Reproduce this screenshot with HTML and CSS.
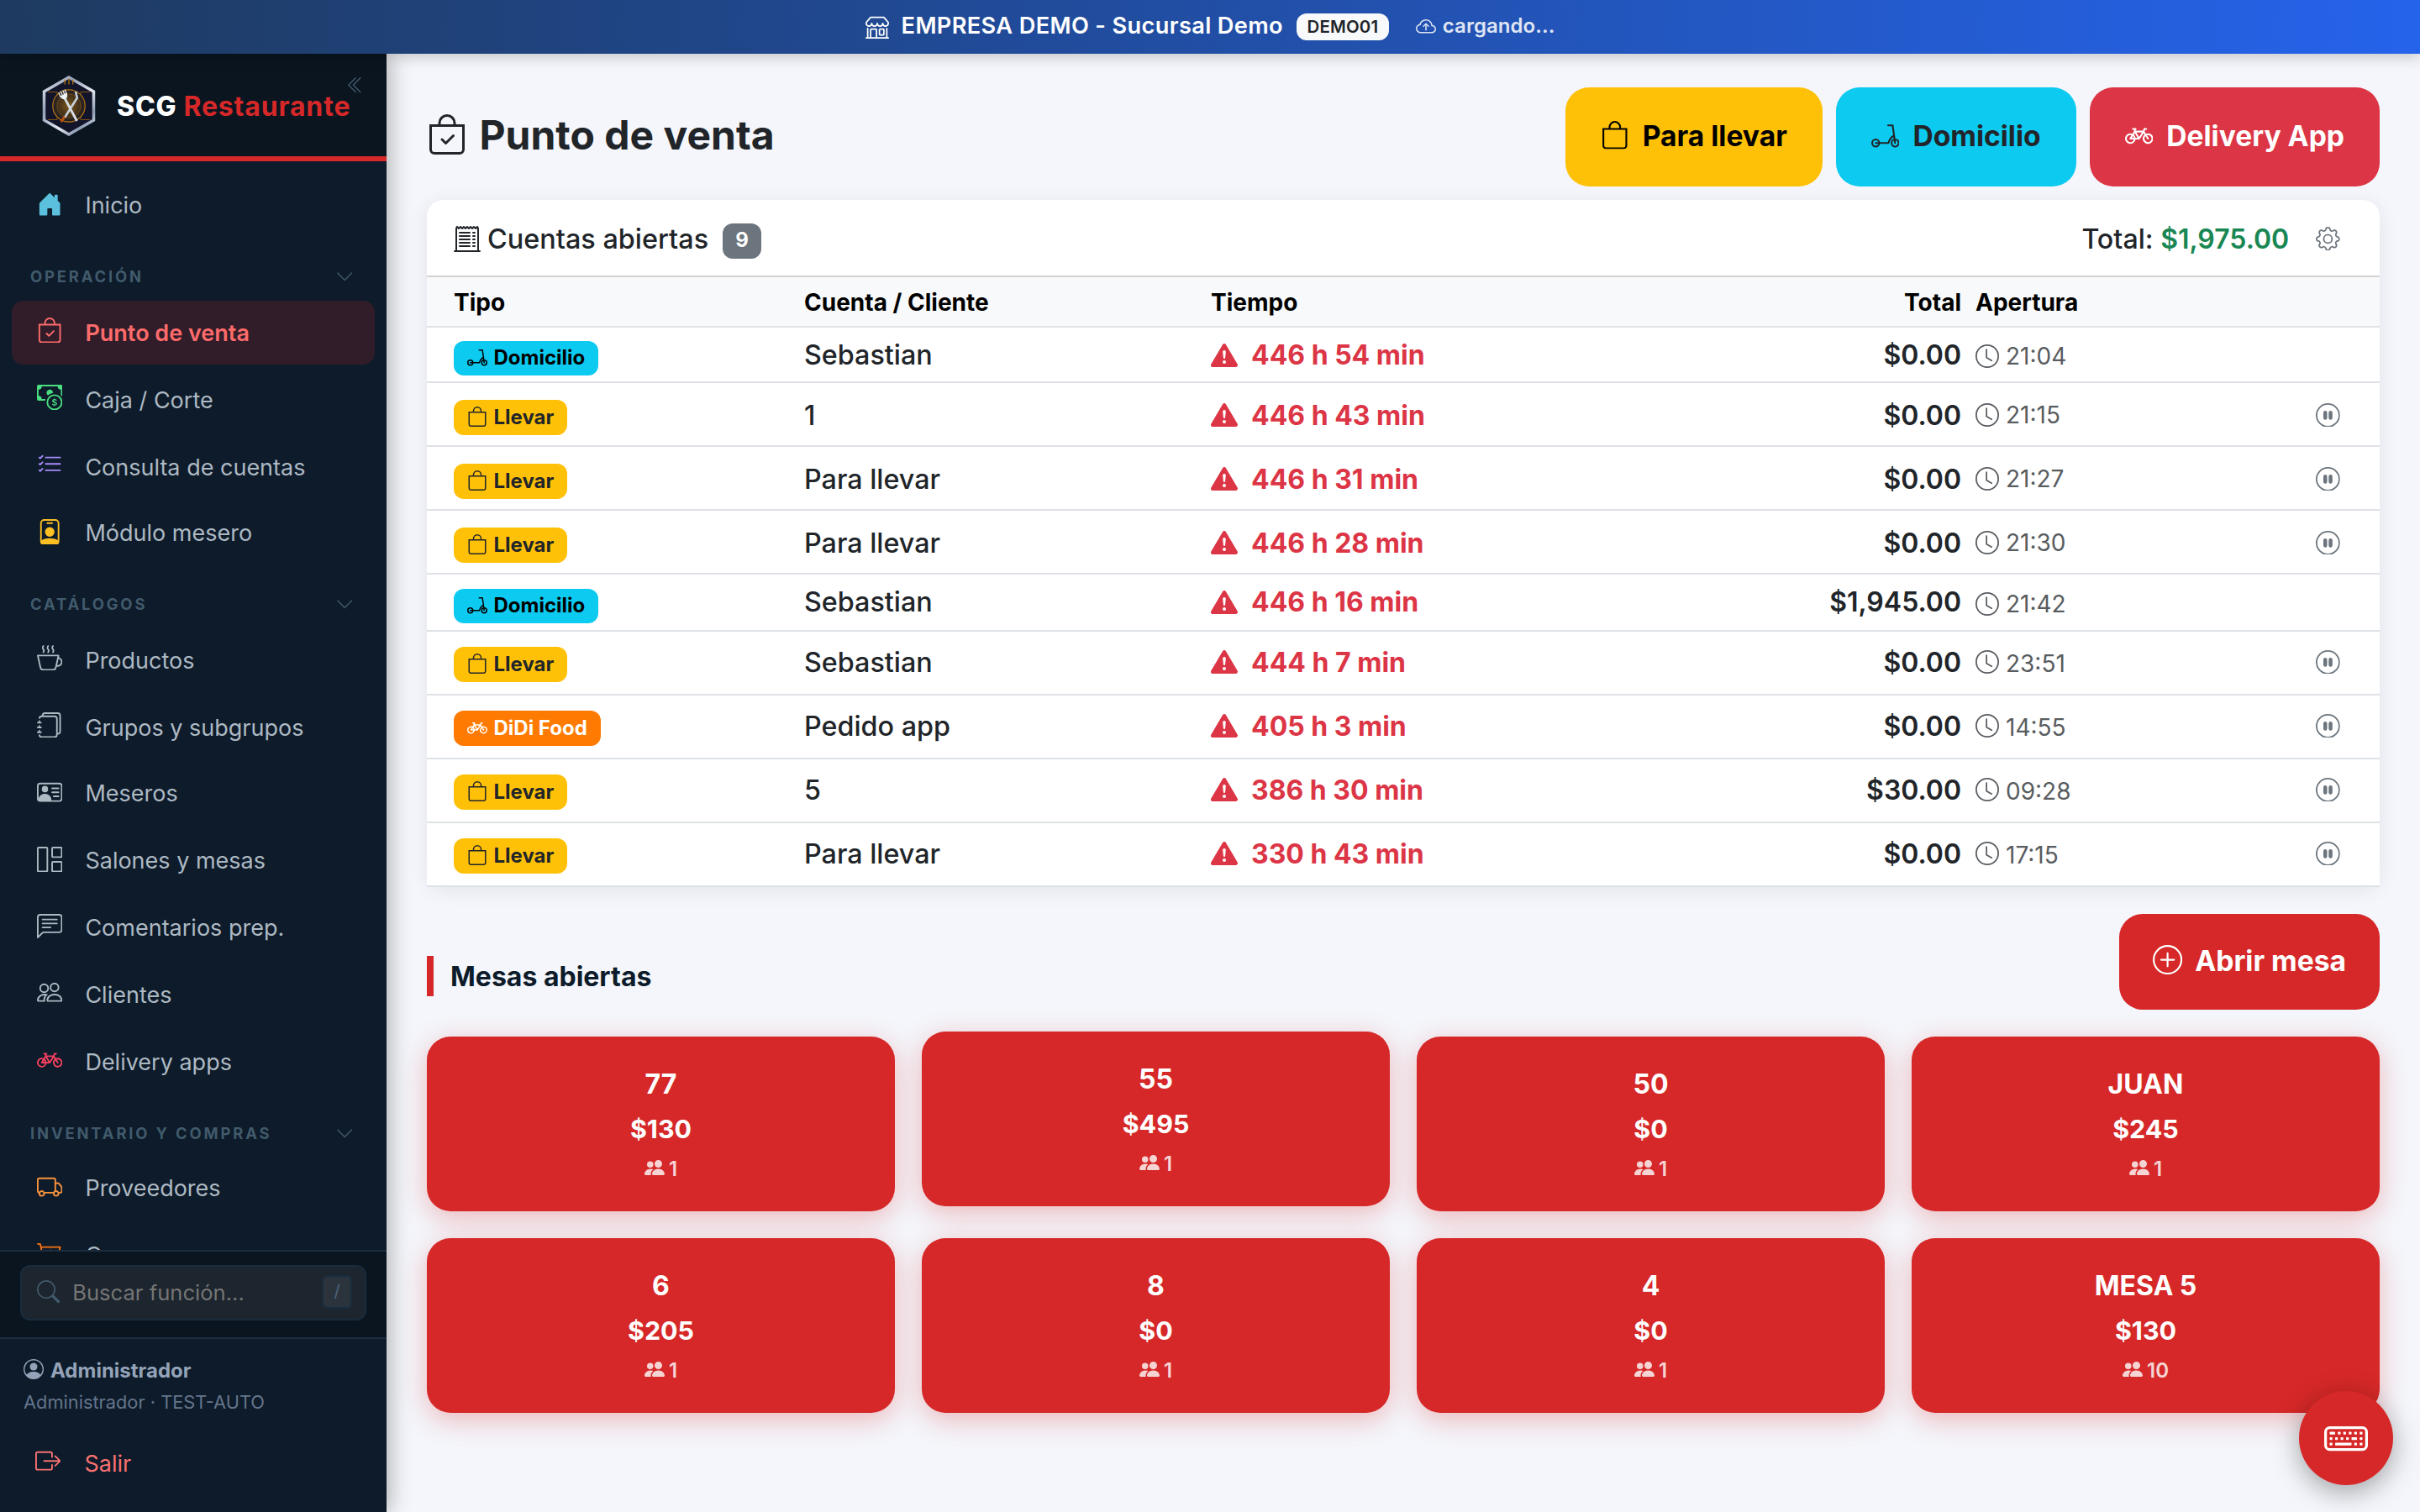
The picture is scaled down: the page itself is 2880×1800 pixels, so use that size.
FILE: index.html
```html
<!DOCTYPE html>
<html lang="es">
<head>
<meta charset="utf-8">
<title>Punto de venta - SCG Restaurante</title>
<link rel="stylesheet" href="styles.css">
</head>
<body>
<svg class="sprite" aria-hidden="true">
  <symbol id="bag" viewBox="0 0 16 16"><path d="M8 1a2.5 2.5 0 0 1 2.5 2.5V4h-5v-.5A2.5 2.5 0 0 1 8 1m3.5 3v-.5a3.5 3.5 0 1 0-7 0V4H1v10a2 2 0 0 0 2 2h10a2 2 0 0 0 2-2V4zM2 5h12v9a1 1 0 0 1-1 1H3a1 1 0 0 1-1-1z"/></symbol>
  <symbol id="bag-check" viewBox="0 0 16 16"><path d="M10.854 8.146a.5.5 0 0 1 0 .708l-3 3a.5.5 0 0 1-.708 0l-1.5-1.5a.5.5 0 0 1 .708-.708L7.5 10.793l2.646-2.647a.5.5 0 0 1 .708 0"/><path d="M8 1a2.5 2.5 0 0 1 2.5 2.5V4h-5v-.5A2.5 2.5 0 0 1 8 1m3.5 3v-.5a3.5 3.5 0 1 0-7 0V4H1v10a2 2 0 0 0 2 2h10a2 2 0 0 0 2-2V4zM2 5h12v9a1 1 0 0 1-1 1H3a1 1 0 0 1-1-1z"/></symbol>
  <symbol id="scooter" viewBox="0 0 16 16"><g fill="none" stroke="currentColor" stroke-linecap="round" stroke-linejoin="round"><circle cx="2.5" cy="12.5" r="2"/><circle cx="13.5" cy="12.5" r="2"/><path d="M9.5 2.5h2.6l1.4 10M2.5 12.5H9.7C10.2 10.8 11.3 9 12.9 8.3"/></g></symbol>
  <symbol id="bicycle" viewBox="0 0 16 16"><path d="M4 4.5a.5.5 0 0 1 .5-.5H6a.5.5 0 0 1 0 1v.5h4.14l.386-1.158A.5.5 0 0 1 11 4h1a.5.5 0 0 1 0 1h-.64l-.311.935.807 1.29a3 3 0 1 1-.848.53l-.508-.812-2.076 3.322A.5.5 0 0 1 8 10.5H5.959a3 3 0 1 1-1.815-3.274L5 5.856V5h-.5a.5.5 0 0 1-.5-.5m1.5 2.443-.508.814c.5.444.85 1.054.967 1.743h1.139zM8 9.057 9.598 6.5H6.402zM4.937 9.5a2 2 0 0 0-.487-.877l-.548.877zM3.603 8.092A2 2 0 1 0 4.937 10.5H3a.5.5 0 0 1-.424-.765zm7.947.53a2 2 0 1 0 .848-.53l1.026 1.643a.5.5 0 1 1-.848.53z"/></symbol>
  <symbol id="receipt" viewBox="0 0 16 16"><path d="M3 4.5a.5.5 0 0 1 .5-.5h6a.5.5 0 1 1 0 1h-6a.5.5 0 0 1-.5-.5m0 2a.5.5 0 0 1 .5-.5h6a.5.5 0 1 1 0 1h-6a.5.5 0 0 1-.5-.5m0 2a.5.5 0 0 1 .5-.5h6a.5.5 0 1 1 0 1h-6a.5.5 0 0 1-.5-.5m0 2a.5.5 0 0 1 .5-.5h6a.5.5 0 0 1 0 1h-6a.5.5 0 0 1-.5-.5m0 2a.5.5 0 0 1 .5-.5h6a.5.5 0 0 1 0 1h-6a.5.5 0 0 1-.5-.5M11.5 4a.5.5 0 0 0 0 1h1a.5.5 0 0 0 0-1zm0 2a.5.5 0 0 0 0 1h1a.5.5 0 0 0 0-1zm0 2a.5.5 0 0 0 0 1h1a.5.5 0 0 0 0-1zm0 2a.5.5 0 0 0 0 1h1a.5.5 0 0 0 0-1zm0 2a.5.5 0 0 0 0 1h1a.5.5 0 0 0 0-1z"/><path d="M2.354.646a.5.5 0 0 0-.801.13l-.5 1A.5.5 0 0 0 1 2v13H.5a.5.5 0 0 0 0 1h15a.5.5 0 0 0 0-1H15V2a.5.5 0 0 0-.053-.224l-.5-1a.5.5 0 0 0-.8-.13L13 1.293l-.646-.647a.5.5 0 0 0-.708 0L11 1.293l-.646-.647a.5.5 0 0 0-.708 0L9 1.293 8.354.646a.5.5 0 0 0-.708 0L7 1.293 6.354.646a.5.5 0 0 0-.708 0L5 1.293 4.354.646a.5.5 0 0 0-.708 0L3 1.293zm-.217 1.198.51.51a.5.5 0 0 0 .707 0L4 1.707l.646.647a.5.5 0 0 0 .708 0L6 1.707l.646.647a.5.5 0 0 0 .708 0L8 1.707l.646.647a.5.5 0 0 0 .708 0L10 1.707l.646.647a.5.5 0 0 0 .708 0L12 1.707l.646.647a.5.5 0 0 0 .708 0l.509-.51.137.274V15H2V2.118z"/></symbol>
  <symbol id="clock" viewBox="0 0 16 16"><path d="M8 3.5a.5.5 0 0 0-1 0V9a.5.5 0 0 0 .252.434l3.5 2a.5.5 0 0 0 .496-.868L8 8.71z"/><path d="M8 16A8 8 0 1 0 8 0a8 8 0 0 0 0 16m7-8A7 7 0 1 1 1 8a7 7 0 0 1 14 0"/></symbol>
  <symbol id="pause" viewBox="0 0 16 16"><path d="M8 15A7 7 0 1 1 8 1a7 7 0 0 1 0 14m0 1A8 8 0 1 0 8 0a8 8 0 0 0 0 16"/><path d="M5 6.25a1.25 1.25 0 1 1 2.5 0v3.5a1.25 1.25 0 1 1-2.5 0zm3.5 0a1.25 1.25 0 1 1 2.5 0v3.5a1.25 1.25 0 1 1-2.5 0z"/></symbol>
  <symbol id="warn" viewBox="0 0 16 16"><path d="M8.982 1.566a1.13 1.13 0 0 0-1.96 0L.165 13.233c-.457.778.091 1.767.98 1.767h13.713c.889 0 1.438-.99.98-1.767zM8 5c.535 0 .954.462.9.995l-.35 3.507a.552.552 0 0 1-1.1 0L7.1 5.995A.905.905 0 0 1 8 5m.002 6a1 1 0 1 1 0 2 1 1 0 0 1 0-2"/></symbol>
  <symbol id="gear" viewBox="0 0 16 16"><path d="M8 4.754a3.246 3.246 0 1 0 0 6.492 3.246 3.246 0 0 0 0-6.492M5.754 8a2.246 2.246 0 1 1 4.492 0 2.246 2.246 0 0 1-4.492 0"/><path d="M9.796 1.343c-.527-1.79-3.065-1.79-3.592 0l-.094.319a.873.873 0 0 1-1.255.52l-.292-.16c-1.64-.892-3.433.902-2.54 2.541l.159.292a.873.873 0 0 1-.52 1.255l-.319.094c-1.79.527-1.79 3.065 0 3.592l.319.094a.873.873 0 0 1 .52 1.255l-.16.292c-.892 1.64.901 3.434 2.541 2.54l.292-.159a.873.873 0 0 1 1.255.52l.094.319c.527 1.79 3.065 1.79 3.592 0l.094-.319a.873.873 0 0 1 1.255-.52l.292.16c1.64.893 3.434-.902 2.54-2.541l-.159-.292a.873.873 0 0 1 .52-1.255l.319-.094c1.79-.527 1.79-3.065 0-3.592l-.319-.094a.873.873 0 0 1-.52-1.255l.16-.292c.893-1.64-.902-3.433-2.541-2.54l-.292.159a.873.873 0 0 1-1.255-.52zm-2.633.283c.246-.835 1.428-.835 1.674 0l.094.319a1.873 1.873 0 0 0 2.693 1.115l.291-.16c.764-.415 1.6.42 1.184 1.185l-.159.292a1.873 1.873 0 0 0 1.116 2.692l.318.094c.835.246.835 1.428 0 1.674l-.319.094a1.873 1.873 0 0 0-1.115 2.693l.16.291c.415.764-.42 1.6-1.185 1.184l-.291-.159a1.873 1.873 0 0 0-2.693 1.116l-.094.318c-.246.835-1.428.835-1.674 0l-.094-.319a1.873 1.873 0 0 0-2.692-1.115l-.292.16c-.764.415-1.6-.42-1.184-1.185l.159-.291A1.873 1.873 0 0 0 1.945 8.93l-.319-.094c-.835-.246-.835-1.428 0-1.674l.319-.094A1.873 1.873 0 0 0 3.06 4.377l-.16-.292c-.415-.764.42-1.6 1.185-1.184l.292.159a1.873 1.873 0 0 0 2.692-1.115z"/></symbol>
  <symbol id="shop" viewBox="0 0 16 16"><path d="M2.97 1.35A1 1 0 0 1 3.73 1h8.54a1 1 0 0 1 .76.35l2.609 3.044A1.5 1.5 0 0 1 16 5.37v.255a2.375 2.375 0 0 1-4.25 1.458A2.37 2.37 0 0 1 9.875 8 2.37 2.37 0 0 1 8 7.083 2.37 2.37 0 0 1 6.125 8a2.37 2.37 0 0 1-1.875-.917A2.375 2.375 0 0 1 0 5.625V5.37a1.5 1.5 0 0 1 .361-.976zm1.78 4.275a1.375 1.375 0 0 0 2.75 0 .5.5 0 0 1 1 0 1.375 1.375 0 0 0 2.75 0 .5.5 0 0 1 1 0 1.375 1.375 0 1 0 2.75 0V5.37a.5.5 0 0 0-.12-.325L12.27 2H3.73L1.12 5.045A.5.5 0 0 0 1 5.37v.255a1.375 1.375 0 0 0 2.75 0 .5.5 0 0 1 1 0M1.5 8.5A.5.5 0 0 1 2 9v6h1v-5a1 1 0 0 1 1-1h3a1 1 0 0 1 1 1v5h6V9a.5.5 0 0 1 1 0v6h.5a.5.5 0 0 1 0 1H.5a.5.5 0 0 1 0-1H1V9a.5.5 0 0 1 .5-.5M4 15h3v-5H4zm5-5a1 1 0 0 1 1-1h2a1 1 0 0 1 1 1v3a1 1 0 0 1-1 1h-2a1 1 0 0 1-1-1zm3 0h-2v3h2z"/></symbol>
  <symbol id="cloud" viewBox="0 0 16 16"><path d="M7.646 5.146a.5.5 0 0 1 .708 0l2 2a.5.5 0 0 1-.708.708L8.5 6.707V10.5a.5.5 0 0 1-1 0V6.707L6.354 7.854a.5.5 0 1 1-.708-.708z"/><path d="M4.406 3.342A5.53 5.53 0 0 1 8 2c2.69 0 4.923 2 5.166 4.579C14.758 6.804 16 8.137 16 9.773 16 11.569 14.502 13 12.687 13H3.781C1.708 13 0 11.366 0 9.318c0-1.763 1.266-3.223 2.942-3.593.143-.863.698-1.723 1.464-2.383m.653.757c-.757.653-1.153 1.44-1.153 2.056v.448l-.445.049C2.064 6.805 1 7.952 1 9.318 1 10.785 2.23 12 3.781 12h8.906C13.98 12 15 10.988 15 9.773c0-1.216-1.02-2.228-2.313-2.228h-.5v-.5C12.188 4.825 10.328 3 8 3a4.53 4.53 0 0 0-2.941 1.1z"/></symbol>
  <symbol id="people-fill" viewBox="0 0 16 16"><path d="M7 14s-1 0-1-1 1-4 5-4 5 3 5 4-1 1-1 1zm4-6a3 3 0 1 0 0-6 3 3 0 0 0 0 6m-5.784 6A2.24 2.24 0 0 1 5 13c0-1.355.68-2.75 1.936-3.72A6.3 6.3 0 0 0 5 9c-4 0-5 3-5 4s1 1 1 1zM4.5 8a2.5 2.5 0 1 0 0-5 2.5 2.5 0 0 0 0 5"/></symbol>
  <symbol id="people" viewBox="0 0 16 16"><path d="M15 14s1 0 1-1-1-4-5-4-5 3-5 4 1 1 1 1zm-7.978-1L7 12.996c.001-.264.167-1.03.76-1.72C8.312 10.629 9.282 10 11 10c1.717 0 2.687.63 3.24 1.276.593.69.758 1.457.76 1.72l-.008.002-.014.002zM11 7a2 2 0 1 0 0-4 2 2 0 0 0 0 4m3-2a3 3 0 1 1-6 0 3 3 0 0 1 6 0M6.936 9.28a6 6 0 0 0-1.23-.247A7 7 0 0 0 5 9c-4 0-5 3-5 4q0 1 1 1h4.216A2.24 2.24 0 0 1 5 13c0-1.01.377-2.042 1.09-2.904.243-.294.526-.569.846-.816M4.92 10A5.5 5.5 0 0 0 4 13H1c0-.26.164-1.03.76-1.724.545-.636 1.492-1.256 3.16-1.275ZM1.5 5.5a3 3 0 1 1 6 0 3 3 0 0 1-6 0m3-2a2 2 0 1 0 0 4 2 2 0 0 0 0-4"/></symbol>
  <symbol id="plus-circle" viewBox="0 0 16 16"><path d="M8 15A7 7 0 1 1 8 1a7 7 0 0 1 0 14m0 1A8 8 0 1 0 8 0a8 8 0 0 0 0 16"/><path d="M8 4a.5.5 0 0 1 .5.5v3h3a.5.5 0 0 1 0 1h-3v3a.5.5 0 0 1-1 0v-3h-3a.5.5 0 0 1 0-1h3v-3A.5.5 0 0 1 8 4"/></symbol>
  <symbol id="keyboard" viewBox="0 0 16 16"><path d="M14 5a1 1 0 0 1 1 1v5a1 1 0 0 1-1 1H2a1 1 0 0 1-1-1V6a1 1 0 0 1 1-1zM2 4a2 2 0 0 0-2 2v5a2 2 0 0 0 2 2h12a2 2 0 0 0 2-2V6a2 2 0 0 0-2-2z"/><g><rect x="2" y="6" width="2" height="1" rx=".25"/><rect x="5" y="6" width="1" height="1" rx=".25"/><rect x="7" y="6" width="1" height="1" rx=".25"/><rect x="9" y="6" width="1" height="1" rx=".25"/><rect x="11" y="6" width="1" height="1" rx=".25"/><rect x="13" y="6" width="1" height="1" rx=".25"/><rect x="2" y="8" width="1" height="1" rx=".25"/><rect x="4" y="8" width="1" height="1" rx=".25"/><rect x="6" y="8" width="1" height="1" rx=".25"/><rect x="8" y="8" width="1" height="1" rx=".25"/><rect x="10" y="8" width="2" height="1" rx=".25"/><rect x="13" y="8" width="1" height="1" rx=".25"/><rect x="2" y="10" width="1" height="1" rx=".25"/><rect x="4" y="10" width="6" height="1" rx=".25"/><rect x="11" y="10" width="1" height="1" rx=".25"/><rect x="13" y="10" width="1" height="1" rx=".25"/></g></symbol>
  <symbol id="house" viewBox="0 0 16 16"><path d="M6.5 14.5v-3.505c0-.245.25-.495.5-.495h2c.25 0 .5.25.5.5v3.5a.5.5 0 0 0 .5.5h4a.5.5 0 0 0 .5-.5v-7a.5.5 0 0 0-.146-.354L13 5.793V2.5a.5.5 0 0 0-.5-.5h-1a.5.5 0 0 0-.5.5v1.293L8.354 1.146a.5.5 0 0 0-.708 0l-6 6A.5.5 0 0 0 1.5 7.5v7a.5.5 0 0 0 .5.5h4a.5.5 0 0 0 .5-.5"/></symbol>
  <symbol id="cash" viewBox="0 0 16 16"><path fill-rule="evenodd" d="M11 15a4 4 0 1 0 0-8 4 4 0 0 0 0 8m5-4a5 5 0 1 1-10 0 5 5 0 0 1 10 0"/><path d="M9.438 11.944c.047.596.518 1.06 1.363 1.116v.44h.375v-.443c.875-.061 1.386-.529 1.386-1.207 0-.618-.39-.936-1.09-1.1l-.296-.07v-1.2c.376.043.614.248.671.532h.658c-.047-.575-.54-1.024-1.329-1.073V8.5h-.375v.45c-.747.073-1.255.522-1.255 1.158 0 .562.378.92 1.007 1.066l.248.061v1.272c-.384-.058-.639-.27-.696-.563h-.668zm1.36-1.354c-.369-.085-.569-.26-.569-.522 0-.294.216-.514.572-.578v1.1zm.432.746c.449.104.655.272.655.569 0 .339-.257.571-.709.614v-1.195z"/><path d="M1 0a1 1 0 0 0-1 1v8a1 1 0 0 0 1 1h4.083q.088-.517.258-1H3a2 2 0 0 0-2-2V3a2 2 0 0 0 2-2h10a2 2 0 0 0 2 2v3.528c.38.34.717.728 1 1.154V1a1 1 0 0 0-1-1z"/><path d="M9.998 5.083 10 5a2 2 0 1 0-3.132 1.65 6 6 0 0 1 3.13-1.567"/></symbol>
  <symbol id="list-check" viewBox="0 0 16 16"><path d="M5 11.5a.5.5 0 0 1 .5-.5h9a.5.5 0 0 1 0 1h-9a.5.5 0 0 1-.5-.5m0-4a.5.5 0 0 1 .5-.5h9a.5.5 0 0 1 0 1h-9a.5.5 0 0 1-.5-.5m0-4a.5.5 0 0 1 .5-.5h9a.5.5 0 0 1 0 1h-9a.5.5 0 0 1-.5-.5M3.854 2.146a.5.5 0 0 1 0 .708l-1.5 1.5a.5.5 0 0 1-.708 0l-.5-.5a.5.5 0 1 1 .708-.708L2 3.293l1.146-1.147a.5.5 0 0 1 .708 0m0 4a.5.5 0 0 1 0 .708l-1.5 1.5a.5.5 0 0 1-.708 0l-.5-.5a.5.5 0 1 1 .708-.708L2 7.293l1.146-1.147a.5.5 0 0 1 .708 0m0 4a.5.5 0 0 1 0 .708l-1.5 1.5a.5.5 0 0 1-.708 0l-.5-.5a.5.5 0 0 1 .708-.708l.146.147 1.146-1.147a.5.5 0 0 1 .708 0"/></symbol>
  <symbol id="badge-person" viewBox="0 0 16 16"><path d="M6.5 2a.5.5 0 0 0 0 1h3a.5.5 0 0 0 0-1zM11 8a3 3 0 1 1-6 0 3 3 0 0 1 6 0"/><path d="M4.5 0A2.5 2.5 0 0 0 2 2.5V14a2 2 0 0 0 2 2h8a2 2 0 0 0 2-2V2.5A2.5 2.5 0 0 0 11.5 0zM3 2.5A1.5 1.5 0 0 1 4.5 1h7A1.5 1.5 0 0 1 13 2.5v10.795a4.2 4.2 0 0 0-.776-.492C11.392 12.387 10.063 12 8 12s-3.392.387-4.224.803a4.2 4.2 0 0 0-.776.492z"/></symbol>
  <symbol id="cup" viewBox="0 0 16 16"><path fill-rule="evenodd" d="M.5 6a.5.5 0 0 0-.488.608l1.652 7.434A2.5 2.5 0 0 0 4.104 16h5.792a2.5 2.5 0 0 0 2.44-1.958l.131-.59a3 3 0 0 0 1.3-5.854l.221-.99A.5.5 0 0 0 13.5 6zM13 12.5a2 2 0 0 1-.316-.025l.867-3.898A2.001 2.001 0 0 1 13 12.5M2.64 13.825 1.123 7h11.754l-1.517 6.825A1.5 1.5 0 0 1 9.896 15H4.104a1.5 1.5 0 0 1-1.464-1.175"/><g fill="none" stroke="currentColor" stroke-linecap="round"><path d="M4 .6C3.3 1.6 3.3 1.8 4 2.6 4.6 3.4 4.6 3.6 4 4.5M7 .6C6.3 1.6 6.3 1.8 7 2.6 7.6 3.4 7.6 3.6 7 4.5M10 .6C9.3 1.6 9.3 1.8 10 2.6 10.6 3.4 10.6 3.6 10 4.5"/></g></symbol>
  <symbol id="journals" viewBox="0 0 16 16"><path d="M5 0h8a2 2 0 0 1 2 2v10a2 2 0 0 1-2 2 2 2 0 0 1-2 2H3a2 2 0 0 1-2-2h1a1 1 0 0 0 1 1h8a1 1 0 0 0 1-1V4a1 1 0 0 0-1-1H3a1 1 0 0 0-1 1H1a2 2 0 0 1 2-2h8a2 2 0 0 1 2 2v9a1 1 0 0 0 1-1V2a1 1 0 0 0-1-1H5a1 1 0 0 0-1 1H3a2 2 0 0 1 2-2"/><path d="M1 6v-.5a.5.5 0 0 1 1 0V6h.5a.5.5 0 0 1 0 1h-2a.5.5 0 0 1 0-1zm0 3v-.5a.5.5 0 0 1 1 0V9h.5a.5.5 0 0 1 0 1h-2a.5.5 0 0 1 0-1zm0 2.5v.5H.5a.5.5 0 0 0 0 1h2a.5.5 0 0 0 0-1H2v-.5a.5.5 0 0 0-1 0"/></symbol>
  <symbol id="vcard" viewBox="0 0 16 16"><path d="M5 8a2 2 0 1 0 0-4 2 2 0 0 0 0 4m4-2.5a.5.5 0 0 1 .5-.5h4a.5.5 0 0 1 0 1h-4a.5.5 0 0 1-.5-.5M9 8a.5.5 0 0 1 .5-.5h4a.5.5 0 0 1 0 1h-4A.5.5 0 0 1 9 8m1 2.5a.5.5 0 0 1 .5-.5h3a.5.5 0 0 1 0 1h-3a.5.5 0 0 1-.5-.5"/><path d="M2 2a2 2 0 0 0-2 2v8a2 2 0 0 0 2 2h12a2 2 0 0 0 2-2V4a2 2 0 0 0-2-2zM1 4a1 1 0 0 1 1-1h12a1 1 0 0 1 1 1v8a1 1 0 0 1-1 1H8.96q.04-.245.04-.5C9 10.567 7.21 9 5 9c-2.086 0-3.8 1.398-3.984 3.181A1 1 0 0 1 1 12z"/></symbol>
  <symbol id="grid" viewBox="0 0 16 16"><path d="M6 1H1v14h5zm9 0h-5v5h5zm0 9v5h-5v-5zM0 1a1 1 0 0 1 1-1h5a1 1 0 0 1 1 1v14a1 1 0 0 1-1 1H1a1 1 0 0 1-1-1zm9 0a1 1 0 0 1 1-1h5a1 1 0 0 1 1 1v5a1 1 0 0 1-1 1h-5a1 1 0 0 1-1-1zm1 8a1 1 0 0 0-1 1v5a1 1 0 0 0 1 1h5a1 1 0 0 0 1-1v-5a1 1 0 0 0-1-1z"/></symbol>
  <symbol id="chat" viewBox="0 0 16 16"><path d="M14 1a1 1 0 0 1 1 1v8a1 1 0 0 1-1 1H4.414A2 2 0 0 0 3 11.586l-2 2V2a1 1 0 0 1 1-1zM2 0a2 2 0 0 0-2 2v12.793a.5.5 0 0 0 .854.353l2.853-2.853A1 1 0 0 1 4.414 12H14a2 2 0 0 0 2-2V2a2 2 0 0 0-2-2z"/><path d="M3 3.5a.5.5 0 0 1 .5-.5h9a.5.5 0 0 1 0 1h-9a.5.5 0 0 1-.5-.5M3 6a.5.5 0 0 1 .5-.5h9a.5.5 0 0 1 0 1h-9A.5.5 0 0 1 3 6m0 2.5a.5.5 0 0 1 .5-.5h5a.5.5 0 0 1 0 1h-5a.5.5 0 0 1-.5-.5"/></symbol>
  <symbol id="truck" viewBox="0 0 16 16"><path d="M0 3.5A1.5 1.5 0 0 1 1.5 2h9A1.5 1.5 0 0 1 12 3.5V5h1.02a1.5 1.5 0 0 1 1.17.563l1.481 1.85a1.5 1.5 0 0 1 .329.938V10.5a1.5 1.5 0 0 1-1.5 1.5H14a2 2 0 1 1-4 0H5a2 2 0 1 1-3.998-.085A1.5 1.5 0 0 1 0 10.5zm1.294 7.456A2 2 0 0 1 4.732 11h5.536a2 2 0 0 1 .732-.732V3.5a.5.5 0 0 0-.5-.5h-9a.5.5 0 0 0-.5.5v7a.5.5 0 0 0 .294.456M12 10a2 2 0 0 1 1.732 1h.768a.5.5 0 0 0 .5-.5V8.35a.5.5 0 0 0-.11-.312l-1.48-1.85A.5.5 0 0 0 13.02 6H12zm-9 1a1 1 0 1 0 0 2 1 1 0 0 0 0-2m9 0a1 1 0 1 0 0 2 1 1 0 0 0 0-2"/></symbol>
  <symbol id="cart" viewBox="0 0 16 16"><path d="M9 5.5a.5.5 0 0 0-1 0V7H6.5a.5.5 0 0 0 0 1H8v1.5a.5.5 0 0 0 1 0V8h1.5a.5.5 0 0 0 0-1H9z"/><path d="M.5 1a.5.5 0 0 0 0 1h1.11l.401 1.607 1.498 7.985A.5.5 0 0 0 4 12h1a2 2 0 1 0 0 4 2 2 0 0 0 0-4h7a2 2 0 1 0 0 4 2 2 0 0 0 0-4h1a.5.5 0 0 0 .491-.408l1.5-8A.5.5 0 0 0 14.5 3H2.89l-.405-1.621A.5.5 0 0 0 2 1zm3.415 10L3.102 4h10.796l-1.313 7z"/></symbol>
  <symbol id="search" viewBox="0 0 16 16"><path d="M11.742 10.344a6.5 6.5 0 1 0-1.397 1.398h-.001q.044.06.098.115l3.85 3.85a1 1 0 0 0 1.415-1.414l-3.85-3.85a1 1 0 0 0-.115-.1zM12 6.5a5.5 5.5 0 1 1-11 0 5.5 5.5 0 0 1 11 0"/></symbol>
  <symbol id="person-circle" viewBox="0 0 16 16"><path d="M11 6a3 3 0 1 1-6 0 3 3 0 0 1 6 0"/><path fill-rule="evenodd" d="M0 8a8 8 0 1 1 16 0A8 8 0 0 1 0 8m8-7a7 7 0 0 0-5.468 11.37C3.242 11.226 4.805 10 8 10s4.757 1.225 5.468 2.37A7 7 0 0 0 8 1"/></symbol>
  <symbol id="exit" viewBox="0 0 16 16"><path d="M10 12.5a.5.5 0 0 1-.5.5h-8a.5.5 0 0 1-.5-.5v-9a.5.5 0 0 1 .5-.5h8a.5.5 0 0 1 .5.5v2a.5.5 0 0 0 1 0v-2A1.5 1.5 0 0 0 9.5 2h-8A1.5 1.5 0 0 0 0 3.5v9A1.5 1.5 0 0 0 1.5 14h8a1.5 1.5 0 0 0 1.5-1.5v-2a.5.5 0 0 0-1 0z"/><path d="M15.854 8.354a.5.5 0 0 0 0-.708l-3-3a.5.5 0 0 0-.708.708L14.293 7.5H5.5a.5.5 0 0 0 0 1h8.793l-2.147 2.146a.5.5 0 0 0 .708.708z"/></symbol>
  <symbol id="chev-down" viewBox="0 0 16 16"><path d="M1.646 4.646a.5.5 0 0 1 .708 0L8 10.293l5.646-5.647a.5.5 0 0 1 .708.708l-6 6a.5.5 0 0 1-.708 0l-6-6a.5.5 0 0 1 0-.708"/></symbol>
  <symbol id="chev-left2" viewBox="0 0 16 16"><path d="M8.354 1.646a.5.5 0 0 1 0 .708L2.707 8l5.647 5.646a.5.5 0 0 1-.708.708l-6-6a.5.5 0 0 1 0-.708l6-6a.5.5 0 0 1 .708 0"/><path d="M12.354 1.646a.5.5 0 0 1 0 .708L6.707 8l5.647 5.646a.5.5 0 0 1-.708.708l-6-6a.5.5 0 0 1 0-.708l6-6a.5.5 0 0 1 .708 0"/></symbol>
</svg>

<header class="topbar">
  <svg class="icon topbar-shop"><use href="#shop"/></svg>
  <span class="topbar-name">EMPRESA DEMO - Sucursal Demo</span>
  <span class="topbar-code">DEMO01</span>
  <svg class="icon topbar-cloud"><use href="#cloud"/></svg>
  <span class="topbar-sync">cargando...</span>
</header>

<div class="shell">
  <aside class="sidebar">
    <div class="brand">
      <svg class="logo" viewBox="0 0 64 72">
        <defs>
          <linearGradient id="rim" x1="0" y1="0" x2="1" y2="1"><stop offset="0" stop-color="#eef1f6"/><stop offset=".3" stop-color="#94a1b8"/><stop offset=".6" stop-color="#e6eaf1"/><stop offset=".8" stop-color="#8f9db5"/><stop offset="1" stop-color="#dde3ec"/></linearGradient>
          <radialGradient id="glow"><stop offset="0" stop-color="#7d5718"/><stop offset=".55" stop-color="#4c3719"/><stop offset="1" stop-color="#1e1b25"/></radialGradient>
        </defs>
        <path d="M32 2 61.5 19V53L32 70 2.5 53V19Z" fill="#12142a" stroke="url(#rim)" stroke-width="3.5"/>
        <path d="M27.3 4.5V10.5M32 3.5v7M36.7 4.5v6" stroke="#b9770e" stroke-width="1.2"/>
        <path d="M7 19.5H18V25M57 19.5H46V25M7 52.5H18V47M57 52.5H46V47" fill="none" stroke="#9a5f10" stroke-width=".8"/>
        <circle cx="32" cy="36" r="19.2" fill="url(#glow)" stroke="#b9780f" stroke-width="1.2"/>
        <circle cx="32" cy="36" r="14" fill="none" stroke="#8a5c17" stroke-width=".6"/>
        <path d="M40 19 41.8 26.5 27 50" fill="none" stroke="#c8d0dd" stroke-width="2.6" stroke-linejoin="round"/>
        <path d="M27 49 22.5 55" stroke="#b9500d" stroke-width="3"/>
        <path d="M26 25 41.5 54" stroke="#d7dde7" stroke-width="2.8"/>
        <path d="M19.8 20 22 25.5M22.3 18.8 24.5 24M24.8 17.6 27 23M27 16.5 29.3 22" stroke="#eef1f6" stroke-width="1.3"/>
        <path d="M21.3 24.5 29.5 20.6Q31.5 26 27.8 28 23.5 29 21.3 24.5Z" fill="#eef1f6"/>
      </svg>
      <div class="brand-name">SCG <b>Restaurante</b></div>
      <svg class="icon collapse"><use href="#chev-left2"/></svg>
    </div>
    <nav class="nav">
      <a class="nav-item"><svg class="icon lo c-sky"><use href="#house"/></svg>Inicio</a>
      <div class="nav-section">OPERACIÓN<svg class="icon"><use href="#chev-down"/></svg></div>
      <a class="nav-item active"><svg class="icon"><use href="#bag-check"/></svg>Punto de venta</a>
      <a class="nav-item"><svg class="icon c-green"><use href="#cash"/></svg>Caja / Corte</a>
      <a class="nav-item tight"><svg class="icon c-violet"><use href="#list-check"/></svg>Consulta de cuentas</a>
      <a class="nav-item"><svg class="icon lo c-amber"><use href="#badge-person"/></svg>Módulo mesero</a>
      <div class="nav-section">CATÁLOGOS<svg class="icon"><use href="#chev-down"/></svg></div>
      <a class="nav-item"><svg class="icon"><use href="#cup"/></svg>Productos</a>
      <a class="nav-item tight"><svg class="icon"><use href="#journals"/></svg>Grupos y subgrupos</a>
      <a class="nav-item"><svg class="icon lo"><use href="#vcard"/></svg>Meseros</a>
      <a class="nav-item"><svg class="icon lo"><use href="#grid"/></svg>Salones y mesas</a>
      <a class="nav-item"><svg class="icon lo"><use href="#chat"/></svg>Comentarios prep.</a>
      <a class="nav-item"><svg class="icon"><use href="#people"/></svg>Clientes</a>
      <a class="nav-item"><svg class="icon c-rose"><use href="#bicycle"/></svg>Delivery apps</a>
      <div class="nav-section tight">INVENTARIO Y COMPRAS<svg class="icon"><use href="#chev-down"/></svg></div>
      <a class="nav-item"><svg class="icon lo c-orange"><use href="#truck"/></svg>Proveedores</a>
      <a class="nav-item"><svg class="icon lo c-deep"><use href="#cart"/></svg>Compras</a>
    </nav>
    <div class="search">
      <div class="search-box">
        <svg class="icon"><use href="#search"/></svg>
        <span class="search-hint">Buscar función...</span>
        <kbd>/</kbd>
      </div>
    </div>
    <div class="user">
      <div class="user-name"><svg class="icon"><use href="#person-circle"/></svg>Administrador</div>
      <div class="user-role">Administrador · TEST-AUTO</div>
      <a class="logout"><svg class="icon"><use href="#exit"/></svg>Salir</a>
    </div>
  </aside>

  <main class="main">
    <div class="page-head">
      <h1><svg class="icon"><use href="#bag-check"/></svg>Punto de venta</h1>
      <div class="actions">
        <button class="btn btn-yellow"><svg class="icon"><use href="#bag"/></svg>Para llevar</button>
        <button class="btn btn-cyan"><svg class="icon"><use href="#scooter"/></svg>Domicilio</button>
        <button class="btn btn-pink"><svg class="icon"><use href="#bicycle"/></svg>Delivery App</button>
      </div>
    </div>

    <section class="card">
      <div class="card-head">
        <svg class="icon card-icon"><use href="#receipt"/></svg>
        <span class="card-title">Cuentas abiertas</span>
        <span class="count">9</span>
        <span class="sum">Total: <b>$1,975.00</b></span>
        <svg class="icon card-gear"><use href="#gear"/></svg>
      </div>
      <table>
        <colgroup><col class="w-type"><col class="w-name"><col class="w-time"><col class="w-total"><col class="w-open"><col></colgroup>
        <thead><tr><th>Tipo</th><th>Cuenta / Cliente</th><th>Tiempo</th><th class="right">Total</th><th>Apertura</th><th></th></tr></thead>
        <tbody>
          <tr class="short r1"><td><span class="tag cyan"><svg class="icon"><use href="#scooter"/></svg>Domicilio</span></td><td class="name">Sebastian</td><td><span class="late"><svg class="icon"><use href="#warn"/></svg>446 h 54 min</span></td><td class="total">$0.00</td><td><span class="open"><svg class="icon"><use href="#clock"/></svg>21:04</span></td><td></td></tr>
          <tr><td><span class="tag yellow"><svg class="icon"><use href="#bag"/></svg>Llevar</span></td><td class="name">1</td><td><span class="late"><svg class="icon"><use href="#warn"/></svg>446 h 43 min</span></td><td class="total">$0.00</td><td><span class="open"><svg class="icon"><use href="#clock"/></svg>21:15</span></td><td class="act"><svg class="icon"><use href="#pause"/></svg></td></tr>
          <tr><td><span class="tag yellow"><svg class="icon"><use href="#bag"/></svg>Llevar</span></td><td class="name">Para llevar</td><td><span class="late"><svg class="icon"><use href="#warn"/></svg>446 h 31 min</span></td><td class="total">$0.00</td><td><span class="open"><svg class="icon"><use href="#clock"/></svg>21:27</span></td><td class="act"><svg class="icon"><use href="#pause"/></svg></td></tr>
          <tr><td><span class="tag yellow"><svg class="icon"><use href="#bag"/></svg>Llevar</span></td><td class="name">Para llevar</td><td><span class="late"><svg class="icon"><use href="#warn"/></svg>446 h 28 min</span></td><td class="total">$0.00</td><td><span class="open"><svg class="icon"><use href="#clock"/></svg>21:30</span></td><td class="act"><svg class="icon"><use href="#pause"/></svg></td></tr>
          <tr class="short"><td><span class="tag cyan"><svg class="icon"><use href="#scooter"/></svg>Domicilio</span></td><td class="name">Sebastian</td><td><span class="late"><svg class="icon"><use href="#warn"/></svg>446 h 16 min</span></td><td class="total">$1,945.00</td><td><span class="open"><svg class="icon"><use href="#clock"/></svg>21:42</span></td><td></td></tr>
          <tr class="low"><td><span class="tag yellow"><svg class="icon"><use href="#bag"/></svg>Llevar</span></td><td class="name">Sebastian</td><td><span class="late"><svg class="icon"><use href="#warn"/></svg>444 h 7 min</span></td><td class="total">$0.00</td><td><span class="open"><svg class="icon"><use href="#clock"/></svg><i>23:51</i></span></td><td class="act"><svg class="icon"><use href="#pause"/></svg></td></tr>
          <tr class="low"><td><span class="tag orange"><svg class="icon"><use href="#bicycle"/></svg>DiDi Food</span></td><td class="name">Pedido app</td><td><span class="late"><svg class="icon"><use href="#warn"/></svg>405 h 3 min</span></td><td class="total">$0.00</td><td><span class="open"><svg class="icon"><use href="#clock"/></svg><i>14:55</i></span></td><td class="act"><svg class="icon"><use href="#pause"/></svg></td></tr>
          <tr class="low"><td><span class="tag yellow"><svg class="icon"><use href="#bag"/></svg>Llevar</span></td><td class="name">5</td><td><span class="late"><svg class="icon"><use href="#warn"/></svg>386 h 30 min</span></td><td class="total">$30.00</td><td><span class="open"><svg class="icon"><use href="#clock"/></svg><i>09:28</i></span></td><td class="act"><svg class="icon"><use href="#pause"/></svg></td></tr>
          <tr class="low"><td><span class="tag yellow"><svg class="icon"><use href="#bag"/></svg>Llevar</span></td><td class="name">Para llevar</td><td><span class="late"><svg class="icon"><use href="#warn"/></svg>330 h 43 min</span></td><td class="total">$0.00</td><td><span class="open"><svg class="icon"><use href="#clock"/></svg><i>17:15</i></span></td><td class="act"><svg class="icon"><use href="#pause"/></svg></td></tr>
        </tbody>
      </table>
    </section>

    <div class="tables-head">
      <h2>Mesas abiertas</h2>
      <button class="btn btn-red"><svg class="icon"><use href="#plus-circle"/></svg>Abrir mesa</button>
    </div>
    <div class="tables">
      <div class="mesa"><div class="mesa-name">77</div><div class="mesa-sum">$130</div><div class="mesa-guests"><svg class="icon"><use href="#people-fill"/></svg>1</div></div>
      <div class="mesa raised"><div class="mesa-name">55</div><div class="mesa-sum">$495</div><div class="mesa-guests"><svg class="icon"><use href="#people-fill"/></svg>1</div></div>
      <div class="mesa"><div class="mesa-name">50</div><div class="mesa-sum">$0</div><div class="mesa-guests"><svg class="icon"><use href="#people-fill"/></svg>1</div></div>
      <div class="mesa"><div class="mesa-name">JUAN</div><div class="mesa-sum">$245</div><div class="mesa-guests"><svg class="icon"><use href="#people-fill"/></svg>1</div></div>
      <div class="mesa"><div class="mesa-name">6</div><div class="mesa-sum">$205</div><div class="mesa-guests"><svg class="icon"><use href="#people-fill"/></svg>1</div></div>
      <div class="mesa"><div class="mesa-name">8</div><div class="mesa-sum">$0</div><div class="mesa-guests"><svg class="icon"><use href="#people-fill"/></svg>1</div></div>
      <div class="mesa"><div class="mesa-name">4</div><div class="mesa-sum">$0</div><div class="mesa-guests"><svg class="icon"><use href="#people-fill"/></svg>1</div></div>
      <div class="mesa"><div class="mesa-name">MESA 5</div><div class="mesa-sum">$130</div><div class="mesa-guests"><svg class="icon"><use href="#people-fill"/></svg>10</div></div>
    </div>
  </main>
</div>
<button class="fab"><svg class="icon"><use href="#keyboard"/></svg></button>
</body>
</html>
```
FILE: styles.css
```css
* { box-sizing: border-box; }

body {
  margin: 0;
  width: 2880px;
  height: 1800px;
  overflow: hidden;
  display: flex;
  flex-direction: column;
  background: #f4f6fb;
  color: #212529;
  font-family: Inter, "Liberation Sans", sans-serif;
}

.sprite { display: none; }
.icon { flex: none; display: block; width: 1em; height: 1em; fill: currentColor; }
button { border: 0; font-family: inherit; }

/* Top bar */
.topbar {
  position: relative;
  z-index: 3;
  flex: none;
  height: 64px;
  display: flex;
  align-items: center;
  justify-content: center;
  background: linear-gradient(90deg, #1e3a5f, #2563eb);
  box-shadow: 0 4px 16px rgba(0, 0, 0, .2);
  color: #fff;
  font-weight: 600;
  letter-spacing: .35px;
}
.topbar-shop { font-size: 28px; margin-right: 15px; }
.topbar-name { font-size: 27.2px; line-height: 40px; margin-top: -2px; }
.topbar-code {
  margin: 0 32px 0 16px;
  padding: 0 12.5px;
  height: 32px;
  border-radius: 12px;
  background: #f8f9fa;
  color: #212529;
  font-size: 20.4px;
  line-height: 31px;
  letter-spacing: .2px;
}
.topbar-cloud { font-size: 24px; margin-right: 8px; opacity: .85; }
.topbar-sync { font-size: 24px; margin-top: -3px; letter-spacing: .05px; opacity: .85; }

.shell { flex: 1; min-height: 0; display: flex; }

/* Sidebar */
.sidebar {
  position: relative;
  z-index: 2;
  flex: none;
  width: 460px;
  display: flex;
  flex-direction: column;
  background: #0d1b2a;
  box-shadow: 4px 0 24px rgba(0, 0, 0, .29);
}
.brand {
  flex: none;
  height: 128px;
  display: flex;
  align-items: center;
  padding-left: 50px;
  border-bottom: 6px solid #d62828;
  background: #0a1520;
}
.logo { flex: none; width: 64px; height: 72px; margin: 2px 25px 0 0; }
.brand-name { padding-top: 3px; color: #fff; font-size: 32px; font-weight: 800; letter-spacing: .85px; white-space: nowrap; }
.brand-name b { font-weight: 700; color: #d62828; }
.brand .collapse { margin: 0 0 48px -5px; font-size: 22.4px; color: #415a6c; }

.nav { flex: 1; min-height: 0; overflow: hidden; padding-top: 14px; }
.nav-item {
  display: flex;
  align-items: center;
  height: 76px;
  margin: 0 14px 4px;
  padding-left: 30px;
  border-radius: 14px;
  color: #adb9c3;
  font-size: 27px;
}
.nav-item:has(+ .nav-section) { margin-bottom: 0; }
.nav-item .icon { margin: 0 27px 6px 0; font-size: 30.4px; }
.nav-item .icon.lo { margin-bottom: 2px; }
.nav-item.tight { margin-bottom: 2px; }
.nav-item.active { background: rgba(214, 40, 40, .18); color: #ff6b6b; font-weight: 600; }
.c-sky { color: #5bc0de; }
.c-green { color: #4ade80; }
.c-violet { color: #a78bfa; }
.c-amber { color: #fbbf24; }
.c-rose { color: #f43f5e; }
.c-orange { color: #fb923c; }
.c-deep { color: #f97316; }
.nav-section {
  height: 76px;
  display: flex;
  align-items: center;
  justify-content: space-between;
  padding: 18px 39px 0 36px;
  color: #415a6c;
  font-size: 18.4px;
  font-weight: 700;
  letter-spacing: 2.85px;
}
.nav-section.tight { height: 74px; padding-top: 20px; }
.nav-section .icon { font-size: 22.4px; }

.search {
  flex: none;
  height: 106px;
  padding: 16px 24px 0;
  border-top: 2px solid #1b2d3f;
  border-bottom: 2px solid #1b2d3f;
  background: #0a1520;
}
.search-box {
  height: 66px;
  display: flex;
  align-items: center;
  padding: 0 15px 0 18px;
  border: 2px solid #192c3e;
  border-radius: 12px;
  background: #1d252e;
}
.search-box .icon { font-size: 27.2px; color: #415a6c; margin: 0 15px 2px 0; }
.search-hint { flex: 1; padding-bottom: 2px; color: #757575; font-size: 25.6px; }
.search-box kbd {
  width: 36px;
  height: 40px;
  margin-bottom: 2px;
  border: 2px solid #192c3e;
  border-radius: 6px;
  background: #2b343d;
  color: #4d6375;
  font: 20px/34px Inter, sans-serif;
  text-align: center;
}

.user { flex: none; height: 206px; padding: 20px 28px 0; }
.user-name { display: flex; align-items: center; height: 34px; color: #94a3b8; font-size: 24px; font-weight: 700; }
.user-name .icon { margin: 0 8px 2px 0; }
.user-role { height: 40px; line-height: 40px; padding-top: 1px; color: #64748b; font-size: 21.8px; }
.logout { display: flex; align-items: center; height: 76px; margin-top: 16px; padding-left: 14px; color: #f87171; font-size: 27px; }
.logout .icon { margin: 0 28px 6px 0; font-size: 30.4px; }

/* Main column */
.main { flex: 1; min-width: 0; padding: 40px 48px 0; }
.page-head { display: flex; align-items: center; justify-content: space-between; height: 118px; margin-bottom: 16px; }
h1 { display: flex; align-items: center; margin: 0 0 6px; font-size: 48px; font-weight: 700; }
h1 .icon { margin-right: 14.5px; }
.actions { display: flex; gap: 16px; }
.btn {
  display: flex;
  align-items: center;
  gap: 16px;
  height: 118px;
  padding: 0 42px 4px;
  border-radius: 28px;
  color: #fff;
  font-size: 33.6px;
  font-weight: 700;
  white-space: nowrap;
}
.btn-yellow { background: #ffc107; color: #000; }
.btn-cyan { background: #0dcaf0; color: #212529; }
.btn-pink { background: #dc3545; }
.btn-red { height: 114px; padding: 0 40px 4px; gap: 15px; background: #d62828; }
.btn-red .icon { font-size: 35.2px; }

.card { border-radius: 20px; background: #fff; box-shadow: 0 4px 24px rgba(0, 0, 0, .08); }
.card-head { display: flex; align-items: center; height: 92px; padding: 2px 47px 0 32px; border-bottom: 2px solid #d2d2d2; font-size: 32.2px; font-weight: 500; }
.card-icon { font-size: 32px; }
.card-title { margin: 0 17px 0 8px; font-size: 32.4px; }
.count { width: 46px; height: 42px; margin-top: 6px; border-radius: 12px; background: #6c757d; color: #fff; font-size: 24px; font-weight: 700; line-height: 40px; text-align: center; }
.sum { margin-left: auto; }
.sum b { font-weight: 600; font-size: 32px; color: #198754; }
.card-gear { margin-left: 32px; font-size: 28.8px; color: #6c757d; }

table { width: 100%; table-layout: fixed; border-collapse: separate; border-spacing: 0; }
.w-type { width: 441px; }
.w-name { width: 484px; }
.w-time { width: 500px; }
.w-total { width: 410px; }
.w-open { width: 300px; }
th { height: 60px; padding: 1px 8px 0; border-bottom: 2px solid #dee2e6; background: #f8f9fa; color: #000; font-size: 28px; font-weight: 700; line-height: 34px; text-align: left; }
td { height: 76px; padding: 2px 8px 0; border-bottom: 2px solid #dee2e6; background: #fff; line-height: 40px; vertical-align: middle; }
th:first-child, td:first-child { padding-left: 32px; }
.right, .total { text-align: right; }
.name { padding-top: 4px; font-size: 32.3px; font-weight: 500; }
.total { padding-top: 4px; padding-right: 9px; font-size: 32px; font-weight: 600; }
th.right { padding-right: 9px; }
.low td { padding-top: 0; padding-bottom: 2px; }
.low .name, .low .total { padding-bottom: 0; }
.short td { height: 68px; padding-top: 0; }
.short.r1 td { height: 66px; }
.short.r1 .name, .short.r1 .total { padding-top: 2px; }
.late { display: flex; align-items: center; gap: 16px; padding-top: 2px; color: #dc3545; font-size: 32px; font-weight: 700; }
.late .icon { margin-bottom: 2px; }
.short .late { padding-top: 0; }
.short.r1 .late { padding-top: 2px; }
.short .late .icon { margin-bottom: 0; }
.open { display: flex; align-items: center; gap: 8px; color: #585c60; font-size: 28px; }
.open i { font-style: normal; padding-top: 3px; }
.short .open { padding-top: 4px; }
.act { color: #6c757d; font-size: 28.8px; padding-right: 47px; }
.act .icon { margin-left: auto; }
.tag { display: inline-flex; align-items: center; vertical-align: middle; height: 42px; margin-top: 6px; padding: 0 16px 0 15.5px; gap: 8px; border-radius: 12px; font-size: 24px; font-weight: 700; line-height: 40px; }
.tag .icon { margin-bottom: 2px; }
td:first-child { line-height: 0; }
.short .tag { height: 41px; margin-top: 8px; }
.cyan { background: #0dcaf0; color: #000; }
.yellow { background: #ffc107; color: #212529; }
.orange { background: #ff7a00; color: #fff; }

.tables-head { display: flex; justify-content: space-between; align-items: flex-end; margin: 32px 0; }
h2 { margin: 0 0 16px; padding: 2px 0 0 20px; border-left: 8px solid #d62828; color: #0d1b2a; font-size: 32px; font-weight: 700; line-height: 46px; }
.tables { display: grid; grid-template-columns: repeat(4, 1fr); gap: 32px; }
.mesa { height: 208px; padding-top: 30px; border-radius: 28px; background: #d62828; box-shadow: 0 8px 32px rgba(214, 40, 40, .3); color: #fff; font-weight: 700; text-align: center; }
.mesa.raised { transform: translateY(-6px); }
.mesa-name { font-size: 32px; line-height: 54px; }
.mesa-sum { font-size: 30.4px; line-height: 52px; }
.mesa-guests { display: flex; align-items: center; justify-content: center; gap: 5px; height: 42px; font-size: 24px; font-weight: 600; opacity: .8; }
.mesa-guests .icon { margin-bottom: 2px; }

.fab {
  position: fixed;
  right: 32px;
  bottom: 32px;
  z-index: 4;
  width: 112px;
  height: 112px;
  display: flex;
  align-items: center;
  justify-content: center;
  padding: 0 0 3px;
  border-radius: 50%;
  background: #d62828;
  box-shadow: 0 8px 32px rgba(0, 0, 0, .35);
  color: #fff;
  font-size: 52px;
}
```
